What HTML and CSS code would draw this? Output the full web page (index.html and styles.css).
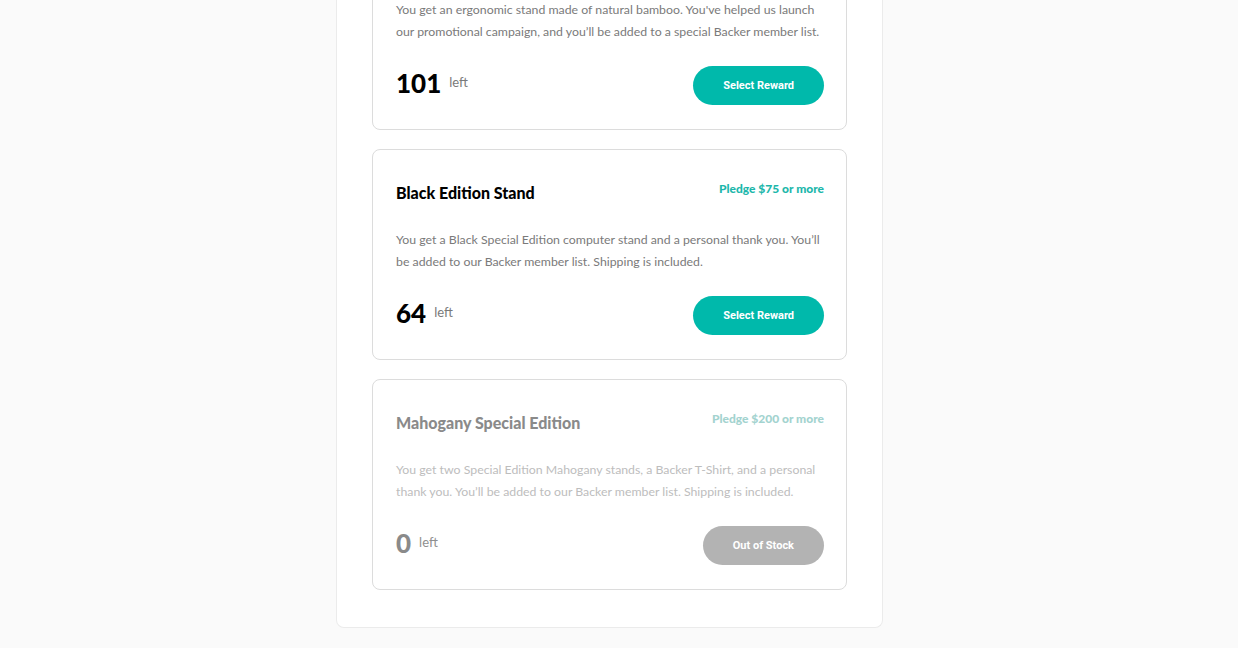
FILE: index.html
```html
<!DOCTYPE html>
<html lang="en">
<head>
<meta charset="utf-8">
<title>Rewards</title>
<link rel="stylesheet" href="styles.css">
</head>
<body>
<main class="page">
  <section class="panel">
    <article class="card">
      <header class="card-head">
        <h2 class="card-title">Bamboo Stand</h2>
        <span class="pledge">Pledge $25 or more</span>
      </header>
      <p class="card-text">You get an ergonomic stand made of natural bamboo. You've helped us launch our promotional campaign, and you’ll be added to a special Backer member list.</p>
      <footer class="card-foot">
        <div class="stock"><span class="stock-num">101</span><span class="stock-label">left</span></div>
        <button class="btn">Select Reward</button>
      </footer>
    </article>
    <article class="card">
      <header class="card-head">
        <h2 class="card-title">Black Edition Stand</h2>
        <span class="pledge">Pledge $75 or more</span>
      </header>
      <p class="card-text">You get a Black Special Edition computer stand and a personal thank you. You’ll be added to our Backer member list. Shipping is included.</p>
      <footer class="card-foot">
        <div class="stock"><span class="stock-num">64</span><span class="stock-label">left</span></div>
        <button class="btn">Select Reward</button>
      </footer>
    </article>
    <article class="card card-disabled">
      <header class="card-head">
        <h2 class="card-title">Mahogany Special Edition</h2>
        <span class="pledge">Pledge $200 or more</span>
      </header>
      <p class="card-text">You get two Special Edition Mahogany stands, a Backer T-Shirt, and a personal thank you. You’ll be added to our Backer member list. Shipping is included.</p>
      <footer class="card-foot">
        <div class="stock"><span class="stock-num">0</span><span class="stock-label">left</span></div>
        <button class="btn btn-off">Out of Stock</button>
      </footer>
    </article>
  </section>
</main>
</body>
</html>
```
FILE: styles.css
```css
* { box-sizing: border-box; }
html, body { margin: 0; padding: 0; }
body {
  background: #fafafa;
  font-family: Lato, "Open Sans", sans-serif;
  height: 648px;
  overflow: hidden;
}
.page {
  padding-right: 19px;
}
.panel {
  width: 547px;
  margin: -101px auto 0;
  background: #fff;
  border: 1px solid #ebebeb;
  border-top: none;
  border-radius: 0 0 8px 8px;
  padding: 20px 35px 37px;
  display: flex;
  flex-direction: column;
  gap: 19px;
}
.card {
  border: 1px solid #dcdcdc;
  border-radius: 8px;
  padding: 28px 22px 24px 23px;
  height: 211px;
}
.card-head {
  display: flex;
  justify-content: space-between;
  align-items: flex-start;
}
.card-title {
  margin: 0;
  font-size: 16px;
  font-weight: 900;
  line-height: 30px;
  color: #000;
}
.pledge {
  font-size: 12px;
  font-weight: 900;
  line-height: 22px;
  color: #1db7ab;
}
.card-text {
  margin: 21px 0 0;
  font-size: 12.3px;
  line-height: 22px;
  color: #7a7a7a;
}
.card-foot {
  margin-top: 23px;
  display: flex;
  justify-content: space-between;
  align-items: center;
}
.stock {
  display: flex;
  align-items: center;
  gap: 8px;
}
.stock-num {
  font-size: 26px;
  font-weight: 900;
  line-height: 30px;
  color: #000;
  margin-bottom: 6px;
}
.stock-label {
  font-size: 13px;
  color: #7a7a7a;
  margin-bottom: 8px;
}
.btn {
  height: 39px;
  border: none;
  border-radius: 20px;
  background: #00b9ab;
  color: #fff;
  font-family: Roboto, "Liberation Sans", sans-serif;
  font-weight: 700;
  font-size: 11px;
  padding: 0 30px;
}
.card-disabled .card-title { color: #8a8a8a; }
.card-disabled .pledge { color: #a3d3cf; }
.card-disabled .card-text { color: #bdbdbd; }
.card-disabled .stock-num { color: #8a8a8a; }
.card-disabled .stock-label { color: #8f8f8f; }
.btn-off { background: #b3b3b3; }
```
